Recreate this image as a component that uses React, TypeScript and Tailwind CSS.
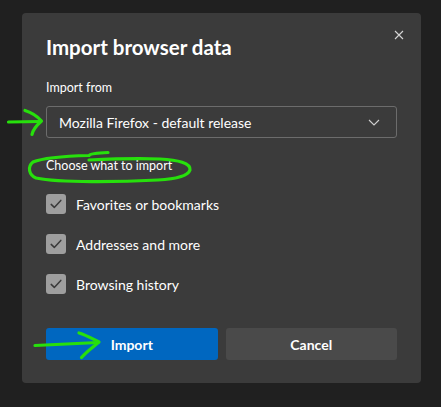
import React from "react";

const items = ["Favorites or bookmarks", "Addresses and more", "Browsing history"];

function CheckBox() {
  return (
    <span className="flex size-5 items-center justify-center rounded-[3px] bg-[#9e9e9e]">
      <svg width="12" height="10" viewBox="0 0 12 10" fill="none">
        <path d="M1.2 5.4 L4.3 8.4 L10.8 1.4" stroke="#3a3a3a" strokeWidth="1.5" strokeLinecap="round" strokeLinejoin="round" />
      </svg>
    </span>
  );
}

function Marks() {
  // green hand-drawn annotations sitting over the dialog
  const g = "#27e00c";
  return (
    <svg className="pointer-events-none absolute inset-0" width="441" height="407" viewBox="0 0 441 407" fill="none">
      <g stroke={g} strokeWidth="3.2" strokeLinecap="round" strokeLinejoin="round">
        <path d="M8.5 122 L40 121.5" />
        <path d="M25 110.5 C33 113 38 117 41.5 121 C37 125 33 129 32 134.5" />
        <path d="M108 152.5 C95 153 90 154 89 155.5 C70 156 45 157 33 162 C27 167 29 175 36 178 C60 183 120 182 158 180 C175 179 188 176 190 170 C191 163 178 160 160 159 C135 158 110 159 89 160" />
        <path d="M35 345.5 L98 342.5" />
        <path d="M79 333 C86 335 93 339 99 342 C93 347 86 352 81.5 357.5" />
      </g>
    </svg>
  );
}

export default function App() {
  return (
    <div className="relative h-[407px] w-[441px] overflow-hidden bg-[#202020] pl-[22px] pt-[13px] font-['Lato',sans-serif] text-white">
      <div className="relative flex h-[370px] w-[399px] flex-col rounded-[4px] bg-[#3b3b3b] px-6 pt-5">
        <button className="absolute right-[14px] top-[14px] flex size-4 items-center justify-center">
          <svg width="10" height="10" viewBox="0 0 10 10">
            <path d="M1 1 L9 9 M9 1 L1 9" stroke="#d6d6d6" strokeWidth="1.1" />
          </svg>
        </button>
        <h1 className="h-7 text-[20.5px] font-bold leading-7">Import browser data</h1>
        <div className="mt-[17px] h-5 text-[12.5px] leading-5">Import from</div>
        <div className="mt-2 flex h-8 items-center justify-between rounded-[3px] border border-[#6c6c6c] pl-3 pr-4">
          <span className="text-[14px]">Mozilla Firefox - default release</span>
          <svg width="12" height="7" viewBox="0 0 12 7" fill="none">
            <path d="M1 1 L6 6 L11 1" stroke="#cfcfcf" strokeWidth="1.1" />
          </svg>
        </div>
        <div className="mt-[18px] h-5 text-[12.5px] leading-5">Choose what to import</div>
        <div className="mt-[18px] flex flex-col gap-5">
          {items.map((t) => (
            <label key={t} className="flex h-5 items-center gap-[10px] text-[14px]">
              <CheckBox />
              <span>{t}</span>
            </label>
          ))}
        </div>
        <div className="mt-[34px] flex gap-2">
          <button className="h-8 flex-1 rounded-[3px] bg-[#0067c0] text-[14px] font-bold">Import</button>
          <button className="h-8 flex-1 rounded-[3px] bg-[#4a4a4a] text-[14px] font-bold">Cancel</button>
        </div>
      </div>
      <Marks />
    </div>
  );
}
